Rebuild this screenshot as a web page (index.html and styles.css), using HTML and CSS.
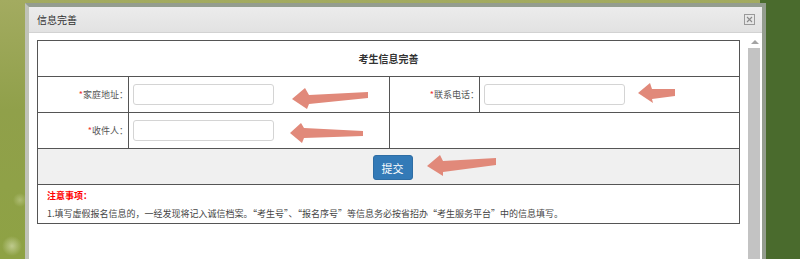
FILE: index.html
```html
<!DOCTYPE html>
<html lang="zh-CN">
<head>
  <meta charset="UTF-8" />
  <title>信息完善</title>
  <link rel="stylesheet" href="styles.css">
</head>
<body>
  <div class="dialog">
    <div class="dialog-title">
      <span>信息完善</span>
      <span class="close-btn">
        <svg width="11" height="11" viewBox="0 0 11 11">
          <rect x="0.5" y="0.5" width="10" height="10" fill="none" stroke="#9a9a9a" />
          <path d="M3 3 L8 8 M8 3 L3 8" stroke="#8a8a8a" stroke-width="1.1" />
        </svg>
      </span>
    </div>

    <div class="dialog-body">
      <div class="dialog-main">
        <table class="info-table">
          <colgroup>
            <col class="col-label">
            <col class="col-field">
            <col class="col-label2">
            <col class="col-field2">
          </colgroup>
          <tr class="row-head">
            <th colspan="4">考生信息完善</th>
          </tr>
          <tr class="row-field">
            <td class="label"><span class="req">*</span>家庭地址：</td>
            <td class="field"><input type="text" class="text-input"></td>
            <td class="label"><span class="req">*</span>联系电话：</td>
            <td class="field"><input type="text" class="text-input"></td>
          </tr>
          <tr class="row-field">
            <td class="label"><span class="req">*</span>收件人：</td>
            <td class="field"><input type="text" class="text-input"></td>
            <td colspan="2"></td>
          </tr>
          <tr class="row-submit">
            <td colspan="4"><button type="button" class="btn-submit">提交</button></td>
          </tr>
          <tr class="row-notes">
            <td colspan="4">
              <p class="notes-title">注意事项：</p>
              <p class="notes-text">1.填写虚假报名信息的，一经发现将记入诚信档案。“考生号”、“报名序号”等信息务必按省招办“考生服务平台”中的信息填写。</p>
            </td>
          </tr>
        </table>
      </div>
      <div class="scrollbar">
        <div class="scroll-arrow"></div>
        <div class="scroll-thumb"></div>
      </div>
    </div>
  </div>

  <!-- annotation arrows drawn over the dialog -->
  <svg class="arrows" width="800" height="259" viewBox="0 0 800 259">
    <g fill="#e1897a">
      <polygon points="292,99 305,88 309,95 368,92 368,98 309,104 307,109" />
      <polygon points="290,133 301,123 304,128 363,131 363,136 304,138 302,143" />
      <polygon points="638,93 650,83 652,89 675,89 675,96 652,99 653,103" />
      <polygon points="427,166 440,155 443,161 496,158 496,165 443,172 443,176" />
    </g>
  </svg>
</body>
</html>
```

FILE: styles.css
```css
* {
  box-sizing: border-box;
}
body {
  margin: 0;
  width: 800px;
  height: 259px;
  overflow: hidden;
  position: relative;
  font-family: "Noto Sans CJK SC", "Microsoft YaHei", sans-serif;
  color: #444;
  background:
    radial-gradient(circle at 12px 246px, rgba(230, 235, 200, 0.55) 0, rgba(230, 235, 200, 0) 10px),
    radial-gradient(circle at 20px 200px, rgba(220, 228, 180, 0.4) 0, rgba(220, 228, 180, 0) 7px),
    linear-gradient(to bottom, #a3ab60 0, #90a04a 110px, #8ea244 259px);
}
body::after {
  content: "";
  position: absolute;
  top: 0;
  right: 0;
  width: 40px;
  height: 259px;
  background: #4a6b2d;
}
.dialog {
  position: relative;
  z-index: 1;
  margin: 3px 0 0 25px;
  width: 741px;
  height: 256px;
  display: flex;
  flex-direction: column;
  border: 4px solid rgba(20, 40, 10, 0.45);
  border-bottom-width: 0;
  border-left-color: rgba(30, 40, 0, 0.28);
  background: #fff;
}
.dialog-title {
  display: flex;
  justify-content: space-between;
  align-items: center;
  height: 26px;
  flex-shrink: 0;
  padding: 0 7px 0 8px;
  background: linear-gradient(to bottom, #ececec, #e2e2e2);
  border-bottom: 1px solid #d2d2d2;
  font-size: 10px;
  color: #333;
}
.close-btn {
  display: flex;
}
.dialog-body {
  display: flex;
  flex: 1;
  min-height: 0;
}
.dialog-main {
  width: 718px;
  padding: 7px 8px 0;
}
.scrollbar {
  width: 15px;
  display: flex;
  flex-direction: column;
  align-items: center;
}
.scroll-arrow {
  margin-top: 7px;
  width: 0;
  height: 0;
  border-left: 4px solid transparent;
  border-right: 4px solid transparent;
  border-bottom: 4px solid #a3a3a3;
}
.scroll-thumb {
  margin: 4px 2px 0 1px;
  align-self: stretch;
  flex: 1;
  background: #c3c3c3;
}
.info-table {
  width: 702px;
  table-layout: fixed;
  border-collapse: collapse;
  border: 1px solid #555;
}
.col-label { width: 91px; }
.col-field { width: 261px; }
.col-label2 { width: 90px; }
.col-field2 { width: 260px; }
.info-table th,
.info-table td {
  border: 1px solid #555;
  padding: 0;
  height: 36px;
}
.row-head th {
  font-size: 10px;
  font-weight: bold;
  color: #333;
  text-align: center;
}
.label {
  text-align: right;
  font-size: 9px;
  color: #555;
}
.req {
  color: #e33;
}
.info-table .field {
  padding-left: 4px;
}
.text-input {
  display: block;
  width: 141px;
  height: 21px;
  border: 1px solid #d4d4d4;
  border-radius: 3px;
  background: #fff;
}
.row-submit td {
  background: #f0f0f0;
  text-align: center;
  padding-left: 8px;
}
.btn-submit {
  width: 40px;
  height: 25px;
  padding: 0;
  border: 1px solid #2e6da4;
  border-radius: 3px;
  background: #337ab7;
  color: #fff;
  font-family: inherit;
  font-size: 11px;
  vertical-align: middle;
}
.info-table .row-notes td {
  height: 38px;
  padding: 2px 9px 0;
  vertical-align: top;
}
.notes-title,
.notes-text {
  margin: 0;
  font-size: 9px;
  line-height: 18px;
}
.notes-title {
  color: #f00;
  font-weight: bold;
}
.notes-text {
  color: #444;
}
.arrows {
  position: absolute;
  top: 0;
  left: 0;
  z-index: 2;
  pointer-events: none;
}
```
